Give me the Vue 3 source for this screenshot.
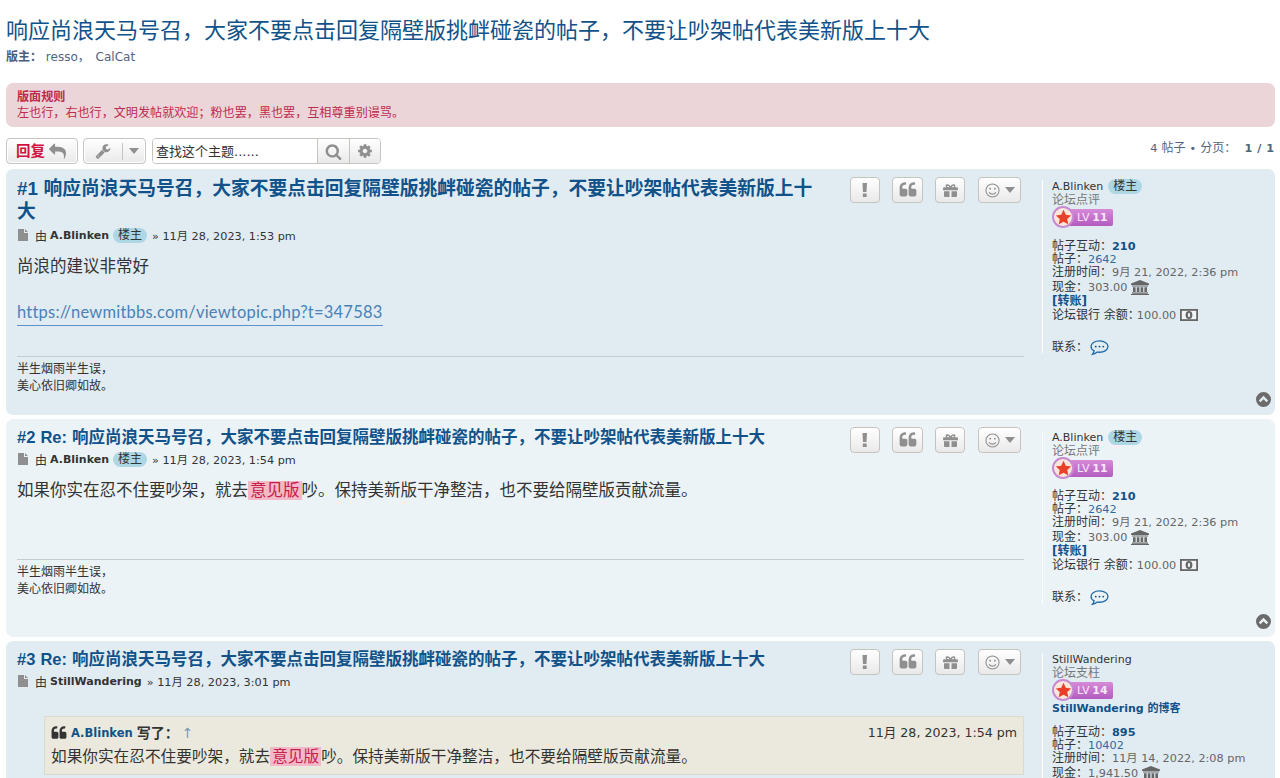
<script setup>
const reply = 'M1792 1120q0 166-127 451-3 7-10.5 24t-13.5 30-13 22q-12 17-28 17-15 0-23.5-10t-8.5-25q0-9 2.5-26.5t2.5-23.5q5-68 5-123 0-101-17.5-181t-48.5-138.5-80-101-105.5-69.5-133-42.5-154-21.5-175.5-6h-224v256q0 26-19 45t-45 19-45-19l-512-512q-19-19-19-45t19-45l512-512q19-19 45-19t45 19 19 45v256h224q713 0 875 403 53 134 53 333z'
const wrench = 'M448 1472q0-26-19-45t-45-19-45 19-19 45 19 45 45 19 45-19 19-45zm644-420l-682 682q-37 37-90 37-52 0-91-37l-106-108q-38-36-38-90 0-53 38-91l681-681q39 98 114.5 173.5t173.5 114.5zm634-435q0 39-23 106-47 134-164.5 217.5t-258.5 83.5q-185 0-316.5-131.5t-131.5-316.5 131.5-316.5 316.5-131.5q58 0 121.5 16.5t107.5 46.5q16 11 16 28t-16 28l-293 169v224l193 107q5-3 79-48.5t135.5-81 70.5-35.5q15 0 23.5 10t8.5 25z'
const search = 'M1216 832q0-185-131.5-316.5t-316.5-131.5-316.5 131.5-131.5 316.5 131.5 316.5 316.5 131.5 316.5-131.5 131.5-316.5zm512 832q0 52-38 90t-90 38q-54 0-90-38l-343-342q-179 124-399 124-143 0-273.5-55.5t-225-150-150-225-55.5-273.5 55.5-273.5 150-225 225-150 273.5-55.5 273.5 55.5 225 150 150 225 55.5 273.5q0 220-124 399l343 343q37 37 37 90z'
const cog = 'M1152 896q0-106-75-181t-181-75-181 75-75 181 75 181 181 75 181-75 75-181zm512-109v222q0 12-8 23t-20 13l-185 28q-19 54-39 91 35 50 107 138 10 12 10 25t-9 23q-27 37-99 108t-94 71q-12 0-26-9l-138-108q-44 23-91 38-16 136-29 186-7 28-36 28h-222q-14 0-24.5-8.5t-11.5-21.5l-28-184q-49-16-90-37l-141 107q-10 9-25 9-14 0-25-11-126-114-165-168-7-10-7-23 0-12 8-23 15-21 51-66.5t54-70.5q-27-50-41-99l-183-27q-13-2-21-12.5t-8-23.5v-222q0-12 8-23t19-13l186-28q14-46 39-92-40-57-107-138-10-12-10-24 0-10 9-23 26-36 98.5-107.5t94.5-71.5q13 0 26 10l138 107q44-23 91-38 16-136 29-186 7-28 36-28h222q14 0 24.5 8.5t11.5 21.5l28 184q49 16 90 37l142-107q9-9 24-9 13 0 25 10 129 119 165 170 7 8 7 22 0 12-8 23-15 21-51 66.5t-54 70.5q26 50 41 98l183 28q13 2 21 12.5t8 23.5z'
const quote = 'M832 960v384q0 80-56 136t-136 56h-384q-80 0-136-56t-56-136v-704q0-104 40.5-198.5t109.5-163.5 163.5-109.5 198.5-40.5h64q26 0 45 19t19 45v128q0 26-19 45t-45 19h-64q-106 0-181 75t-75 181v32q0 40 28 68t68 28h224q80 0 136 56t56 136zm896 0v384q0 80-56 136t-136 56h-384q-80 0-136-56t-56-136v-704q0-104 40.5-198.5t109.5-163.5 163.5-109.5 198.5-40.5h64q26 0 45 19t19 45v128q0 26-19 45t-45 19h-64q-106 0-181 75t-75 181v32q0 40 28 68t68 28h224q80 0 136 56t56 136z'

const topic = '响应尚浪天马号召，大家不要点击回复隔壁版挑衅碰瓷的帖子，不要让吵架帖代表美新版上十大'

const blinken = {
  name: 'A.Blinken', owner: true, rank: '论坛点评', lv: '11',
  rep: '210', posts: '2642', joined: '9月 21, 2022, 2:36 pm', cash: '303.00', bank: '100.00'
}
const wandering = {
  name: 'StillWandering', owner: false, rank: '论坛支柱', lv: '14', blog: true,
  rep: '895', posts: '10402', joined: '11月 14, 2022, 2:08 pm', cash: '1,941.50', bank: '100.00'
}

const posts = [
  { id: 1, title: `#1 ${topic}`, first: true, user: blinken, time: '11月 28, 2023, 1:53 pm', kind: 'link', sig: true },
  { id: 2, title: `#2 Re: ${topic}`, user: blinken, time: '11月 28, 2023, 1:54 pm', kind: 'reply', sig: true },
  { id: 3, title: `#3 Re: ${topic}`, user: wandering, time: '11月 28, 2023, 3:01 pm', kind: 'quote' }
]
</script>

<template>
  <div class="page">
    <h2 class="forum-title">{{ topic }}</h2>
    <p class="mods"><strong>版主：</strong> <a>resso</a>， <a class="mod-2">CalCat</a></p>

    <div class="rules">
      <strong>版面规则</strong><br />
      左也行，右也行，文明发帖就欢迎；粉也罢，黑也罢，互相尊重别谩骂。
    </div>

    <div class="action-bar">
      <a class="btn reply-btn">
        <span class="reply-text">回复</span>
        <svg viewBox="0 0 1792 1792" width="17" height="17"><path :d="reply" /></svg>
      </a>
      <a class="btn tools-btn">
        <svg viewBox="0 0 1792 1792" width="16" height="16"><path :d="wrench" /></svg>
        <span class="sep"></span>
        <svg class="caret" viewBox="0 0 10 6" width="10" height="6"><path d="M0 0h10L5 6z" /></svg>
      </a>
      <div class="search-box">
        <span class="search-input">查找这个主题......</span>
        <span class="search-btn"><svg viewBox="0 0 1792 1792" width="17" height="17"><path :d="search" /></svg></span>
        <span class="search-btn cog"><svg viewBox="0 0 1792 1792" width="16" height="16"><path :d="cog" /></svg></span>
      </div>
      <div class="pagination">4 <span class="zh">帖子</span> • <span class="zh">分页：</span> <strong>1 / 1</strong></div>
    </div>

    <div
      v-for="post in posts"
      :key="post.id"
      class="post"
      :class="[`post-${post.id}`]"
    >
      <div class="postbody">
        <div class="post-head">
          <h3 :class="{ first: post.first }">{{ post.title }}</h3>
          <div class="post-buttons">
            <span class="pbtn"><svg viewBox="0 0 6 16" width="5.5" height="14"><path d="M.4 0h5.200l-.6 10.400H1zM.8 12h4.400v4H.8z" /></svg></span>
            <span class="pbtn wide"><svg viewBox="0 0 1792 1792" width="18" height="18"><path :d="quote" /></svg></span>
            <span class="pbtn">
              <svg viewBox="0 0 16 14" width="15" height="13"><path fill-rule="evenodd" d="M3.400.6C4.900-.5 7 .6 8 2.300 9 .6 11.100-.5 12.600.6c1.200 1 .8 2.300-.2 2.900H15c.6 0 1 .4 1 1v2.300H0V4.500c0-.6.400-1 1-1h2.600C2.600 2.900 2.200 1.600 3.400.6zM4.900 1.800c-.8 0-.9 1 0 1.400.5.200 1.300.3 1.900.3-.4-.9-1.100-1.700-1.900-1.700zM11.100 1.800c-.8 0-1.500.8-1.900 1.700.6 0 1.400-.1 1.900-.3.900-.4.800-1.400 0-1.400zM1 7.800h5.900V14H2c-.6 0-1-.4-1-1zM9.100 7.800H15V13c0 .6-.4 1-1 1H9.100z" /></svg>
            </span>
            <span class="pbtn smile">
              <svg class="face" viewBox="0 0 16 16" width="15" height="15"><circle cx="8" cy="8" r="7" /><circle class="eye" cx="5.500" cy="6" r="1" /><circle class="eye" cx="10.500" cy="6" r="1" /><path d="M4.300 10c1.800 2.500 5.600 2.500 7.400 0" /></svg>
              <svg class="caret" viewBox="0 0 10 6" width="10" height="6"><path d="M0 0h10L5 6z" /></svg>
            </span>
          </div>
        </div>
        <p class="author">
          <svg class="file" viewBox="0 0 10 12" width="10" height="12"><path d="M0 0h6v4h4v8H0zM7 0l3 3H7z" /></svg>
          <span class="zh">由</span>
          <strong>{{ post.user.name }}</strong>
          <span v-if="post.user.owner" class="tag">楼主</span>
          <span class="time">» {{ post.time }}</span>
        </p>

        <div v-if="post.kind === 'link'" class="content link-content">
          尚浪的建议非常好
          <a class="url">https://newmitbbs.com/viewtopic.php?t=347583</a>
        </div>
        <div v-else-if="post.kind === 'reply'" class="content reply-content">
          如果你实在忍不住要吵架，就去<span class="mark">意见版</span>吵。保持美新版干净整洁，也不要给隔壁版贡献流量。
        </div>
        <div v-else class="content quote-content">
          <blockquote>
            <div class="quote-head">
              <span class="quote-who">
                <svg viewBox="0 0 1792 1792" width="16" height="16"><path :d="quote" /></svg>
                <a>A.Blinken</a>
                <strong>写了：</strong>
                <span class="up">↑</span>
              </span>
              <span class="quote-time">11月 28, 2023, 1:54 pm</span>
            </div>
            如果你实在忍不住要吵架，就去<span class="mark">意见版</span>吵。保持美新版干净整洁，也不要给隔壁版贡献流量。
          </blockquote>
        </div>

        <div v-if="post.sig" class="signature">半生烟雨半生误，<br />美心依旧卿如故。</div>
      </div>

      <div class="profile">
        <div class="who"><span class="name">{{ post.user.name }}</span><span v-if="post.user.owner" class="tag">楼主</span></div>
        <div class="rank">{{ post.user.rank }}</div>
        <div class="level">
          <span class="level-bar"><span class="lv">LV</span> {{ post.user.lv }}</span>
          <span class="level-star">
            <svg viewBox="0 0 20 20" width="17" height="17"><path d="M10 1l2.700 5.700 6.300.8-4.600 4.300 1.200 6.200L10 15l-5.600 3 1.200-6.200L1 7.500l6.300-.8z" /></svg>
          </span>
        </div>
        <div v-if="post.user.blog" class="blog">{{ post.user.name }} 的博客</div>
        <dl class="stats">
          <div>帖子互动：<strong>{{ post.user.rep }}</strong></div>
          <div>帖子：<a>{{ post.user.posts }}</a></div>
          <div>注册时间：<span>{{ post.user.joined }}</span></div>
          <div class="cash first-cash">现金：<span>{{ post.user.cash }}</span>
            <svg viewBox="0 0 18 15" width="18" height="15"><path d="M9 0l9 3.600V5H0V3.600zM1 5.600h16v1H1zM2 7.200h2.600v4.900H2zM5.800 7.200h2.600v4.900H5.800zM9.600 7.200h2.600v4.900H9.600zM13.400 7.200H16v4.900h-2.600zM1 12.600h16v1.100H1zM0 14h18v1H0z" /></svg>
          </div>
          <div class="transfer">[转账]</div>
          <div class="cash bank">论坛银行 余额：<span>{{ post.user.bank }}</span>
            <svg class="money" viewBox="0 0 18 12" width="18" height="12">
              <rect x=".9" y=".9" width="16.200" height="10.200" />
              <ellipse class="bill" cx="9" cy="6" rx="3.400" ry="4" />
              <ellipse class="zero" cx="9" cy="6" rx="1.200" ry="2.300" />
            </svg>
          </div>
          <div class="contact">联系：
            <svg viewBox="0 0 20 17" width="19" height="16"><path d="M10 1C5 1 1 3.500 1 7c0 2 1.300 3.600 3.300 4.600-.2 1.200-.8 2.400-1.800 3.600 2-.3 3.900-1.200 5.200-2.400.8.100 1.500.2 2.300.2 5 0 9-2.600 9-6S15 1 10 1z" /><circle cx="6" cy="7" r="1" /><circle cx="10" cy="7" r="1" /><circle cx="14" cy="7" r="1" /></svg>
          </div>
        </dl>
      </div>

      <svg class="back-top" viewBox="0 0 16 16" width="15" height="15"><path fill-rule="evenodd" d="M8 0a8 8 0 1 1 0 16A8 8 0 0 1 8 0zM8 4L3 9l1.800 1.800L8 7.600l3.200 3.200L13 9z" /></svg>
    </div>
  </div>
</template>

<style>
html, body {
  margin: 0;
  background: #fff;
  overflow: hidden;
  height: 778px;
}
</style>

<style scoped>
.page {
  padding: 0 5px 0 6px;
  height: 778px;
  overflow: hidden;
  font-family: "DejaVu Sans", "Noto Sans CJK SC", sans-serif;
  font-size: 11.25px;
  color: #536482;
}

.zh {
  font-size: 12px;
}

.forum-title {
  margin: 0;
  padding-top: 17px;
  font-family: "Liberation Sans", "Noto Sans CJK SC", sans-serif;
  font-size: 22px;
  line-height: 28px;
  font-weight: 400;
  color: #105289;
}

.mods {
  margin: 4px 0 0;
  line-height: 16px;
  color: #536482;
  font-size: 12px;
}

.mods strong {
  color: #4c5d77;
}

.mod-2 {
  margin-left: 2px;
}

.rules {
  margin-top: 18px;
  height: 44px;
  box-sizing: border-box;
  padding: 6px 11px;
  border-radius: 7px;
  background: #ecd5d8;
  color: #bc2a4d;
  font-size: 12.1px;
  line-height: 16px;
}

.action-bar {
  display: flex;
  align-items: center;
  margin-top: 11px;
  margin-bottom: 5px;
  height: 26px;
}

.btn {
  display: flex;
  align-items: center;
  box-sizing: border-box;
  height: 26px;
  border: 1px solid #c7c3bf;
  border-radius: 4px;
  background: linear-gradient(#fff, #e9e9e9);
  box-shadow: 0 0 0 1px #fff inset;
}

.reply-btn {
  width: 72px;
  padding-left: 9px;
  gap: 4px;
  font-size: 14.5px;
  font-weight: 700;
  color: #d31141;
}

.reply-text {
  margin-top: -3px;
}

.reply-btn svg,
.tools-btn svg,
.search-btn svg {
  fill: #8f8f8f;
}

.tools-btn {
  width: 63px;
  margin-left: 5px;
  padding-left: 11px;
}

.sep {
  width: 1px;
  height: 17px;
  margin: 0 6px 0 11px;
  background: #c7c3bf;
}

.search-box {
  display: flex;
  box-sizing: border-box;
  height: 26px;
  margin-left: 6px;
  border: 1px solid #c7c3bf;
  border-radius: 4px;
  overflow: hidden;
}

.search-input {
  width: 164px;
  padding-left: 3px;
  line-height: 25px;
  font-size: 13px;
  color: #333;
  background: #fff;
  box-sizing: border-box;
}

.search-btn {
  display: flex;
  align-items: center;
  justify-content: center;
  width: 32px;
  box-sizing: border-box;
  border-left: 1px solid #c7c3bf;
  background: linear-gradient(#fff, #e9e9e9);
}

.search-btn.cog {
  width: 31px;
}

.pagination {
  margin-left: auto;
  margin-right: 1px;
  padding-bottom: 10px;
  color: #536482;
  word-spacing: 0.5px;
}

.pagination strong {
  margin-left: 4px;
  word-spacing: 1px;
}

.post {
  position: relative;
  display: flex;
  margin-bottom: 4px;
  padding: 0 10px 0 11px;
  border-radius: 7px;
  background: #e1ebf2;
  box-sizing: border-box;
  color: #333;
}

.post-1 {
  height: 246px;
}

.post-2 {
  height: 218px;
  background: #ecf3f7;
}

.post-3 {
  height: 400px;
}

.postbody {
  width: 1007px;
  flex: none;
}

.post-head {
  display: flex;
  justify-content: space-between;
  align-items: flex-start;
}

h3 {
  margin: 0;
  padding-top: 7px;
  width: 800px;
  font-family: "Liberation Sans", "Noto Sans CJK SC", sans-serif;
  font-size: 16.5px;
  line-height: 22px;
  font-weight: 700;
  word-spacing: 0.5px;
  color: #105289;
}

h3.first {
  padding-top: 8px;
  font-size: 18.75px;
  line-height: 23px;
}

.post-buttons {
  display: flex;
  gap: 12px;
  height: 21px;
  padding-top: 8px;
  margin-right: 3px;
}

.pbtn {
  display: flex;
  align-items: center;
  justify-content: center;
  box-sizing: border-box;
  width: 30px;
  height: 26px;
  border: 1px solid #c7c3bf;
  border-radius: 4px;
  background: linear-gradient(#fff, #e9e9e9);
}

.pbtn svg {
  fill: #8f8f8f;
}

.pbtn.wide {
  width: 31px;
}

.pbtn.smile {
  width: 43px;
  gap: 5px;
  margin-left: 1px;
}

.pbtn .face {
  fill: none;
  stroke: #8f8f8f;
  stroke-width: 1.1;
}

.pbtn .face .eye {
  fill: #8f8f8f;
  stroke: none;
}

.author {
  display: flex;
  align-items: center;
  gap: 4px;
  height: 18px;
  margin: 2px 0 0;
  color: #333;
}

.post-1 .author {
  margin-top: 3px;
}

.author strong {
  margin-left: -1px;
  font-size: 11px;
}

.file {
  fill: #8f8f8f;
  margin: 0 3px 0 1px;
}

.time {
  margin-left: 1px;
}

.tag {
  display: inline-block;
  padding: 0 5px;
  border-radius: 8px;
  line-height: 15px;
  font-size: 12px;
  font-weight: 400;
  color: #333;
  background: #aed7e6;
}

.content {
  font-size: 16.5px;
  line-height: 23px;
  color: #333;
  box-sizing: border-box;
}

.link-content {
  height: 112px;
  padding-top: 11px;
}

.url {
  display: block;
  width: fit-content;
  margin-top: 23px;
  padding-bottom: 1px;
  font-family: "Lato", sans-serif;
  letter-spacing: 0.22px;
  color: #4a82b8;
  border-bottom: 1px solid #5b93cc;
}

.reply-content {
  height: 91px;
  padding-top: 11px;
}

.quote-content {
  padding-top: 26px;
}

blockquote {
  width: 980px;
  height: 59px;
  box-sizing: border-box;
  margin: 0 0 0 27px;
  padding: 7px 6px 0;
  background: #ebe9dd;
  border: 1px solid #dbdbce;
  font-size: 15.675px;
  line-height: 24px;
}

.quote-head {
  display: flex;
  justify-content: space-between;
  height: 18px;
  margin-bottom: 3px;
  line-height: 18px;
}

.quote-who {
  display: flex;
  align-items: center;
  gap: 4px;
  font-size: 14px;
}

.quote-who svg {
  fill: #333;
}

.quote-who a {
  color: #105289;
  font-weight: 700;
  font-size: 11.5px;
}

.up {
  margin-left: -1px;
  color: #7a9cb8;
}

.quote-time {
  font-size: 12.6px;
}

.mark {
  padding: 0 2px;
  background: #f4b9c8;
  color: #c3214a;
}

.signature {
  padding-top: 4px;
  border-top: 1px solid #c6cbcf;
  font-size: 12px;
  line-height: 17px;
  color: #333;
}

.profile {
  flex: 1;
  box-sizing: border-box;
  height: 173px;
  margin: 11px 0 0 18px;
  padding-left: 9px;
  border-left: 1px solid #fff;
  font-size: 11px;
  line-height: 13px;
  color: #333;
}

.post-2 .profile {
  margin-top: 12px;
}

.post-3 .profile {
  height: 400px;
  margin-top: 12px;
}

.who {
  display: flex;
  align-items: center;
  gap: 5px;
  height: 13px;
}

.rank {
  margin-top: 1px;
  font-size: 12px;
  color: #777;
}

.level {
  position: relative;
  height: 22px;
}

.level-bar {
  position: absolute;
  left: 10px;
  top: 2px;
  width: 51px;
  height: 17px;
  padding-left: 15px;
  box-sizing: border-box;
  border-radius: 2px;
  background: linear-gradient(#d68ad8, #b35cc0);
  color: #f6e6f8;
  font-weight: 700;
  font-size: 11px;
  line-height: 17px;
  word-spacing: -1px;
}

.lv {
  font-weight: 400;
}

.level-star {
  position: absolute;
  left: 0;
  top: -1px;
  display: flex;
  align-items: center;
  justify-content: center;
  width: 22px;
  height: 22px;
  box-sizing: border-box;
  border: 2px solid #c88ad0;
  border-radius: 50%;
  background: #fbe6dc;
}

.level-star svg {
  fill: #e8402a;
}

.blog {
  color: #105289;
  font-weight: 700;
}

.stats {
  margin: 11px 0 0;
  font-size: 12px;
}

.post-2 .stats {
  margin-top: 10px;
}

.post-3 .stats {
  margin-top: 11px;
}

.stats strong,
.stats a,
.stats span {
  font-size: 11.25px;
}

.stats strong {
  color: #105289;
}

.stats a {
  color: #2f6ca3;
}

.stats span {
  color: #666;
}

.cash {
  display: flex;
  align-items: center;
  height: 15px;
  white-space: nowrap;
}

.first-cash {
  margin-top: 1px;
}

.cash svg {
  fill: #666;
  margin-left: 4px;
}

.bank span {
  margin-left: -3px;
}

.cash .money {
  fill: #f2f4f5;
  stroke: #666;
  stroke-width: 1.8;
  margin-bottom: 2px;
}

.money .bill {
  fill: #666;
  stroke: none;
}

.money .zero {
  fill: #e8edf1;
  stroke: none;
}

.transfer {
  color: #105289;
  font-weight: 700;
}

.contact {
  display: flex;
  align-items: center;
  height: 16px;
  margin-top: 16.5px;
}

.contact svg {
  fill: none;
  stroke: #1f6aa8;
  stroke-width: 1.4;
  margin-left: 2px;
}

.contact svg circle {
  fill: #105289;
  stroke: none;
}

.back-top {
  position: absolute;
  right: 4px;
  bottom: 8px;
  fill: #6b6b6b;
}
</style>
